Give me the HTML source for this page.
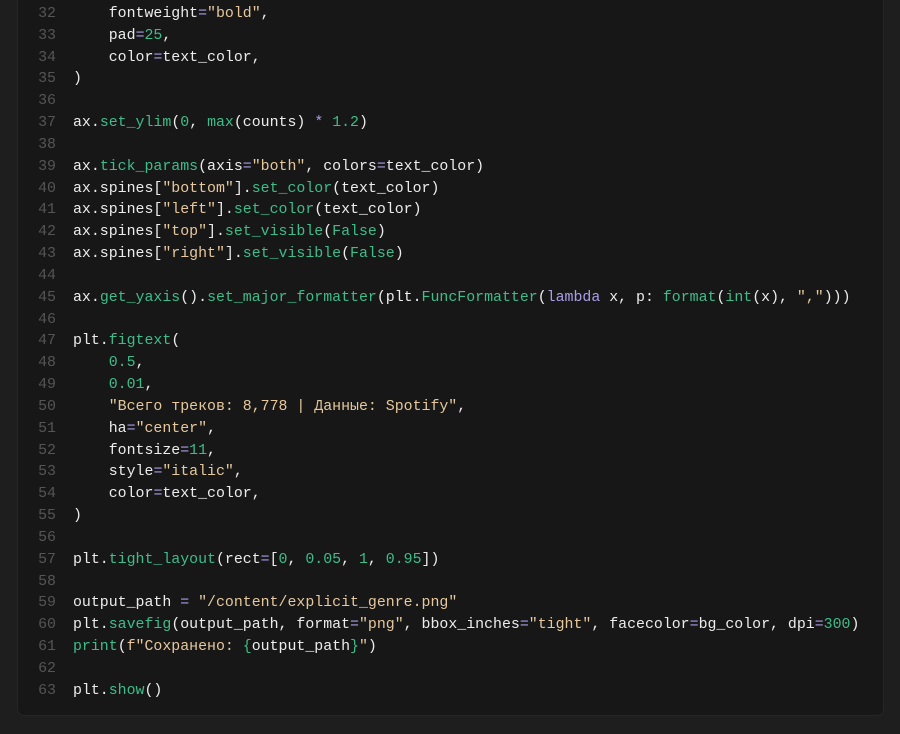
<!DOCTYPE html>
<html><head><meta charset="utf-8"><style>
html,body{margin:0;padding:0;background:#1e1e1e;width:900px;height:734px;overflow:hidden}
.panel{position:absolute;left:17px;top:-10px;width:865px;height:725px;background:#171717;border:1px solid #262626;border-top:none;border-radius:0 0 7px 7px}
.code{position:absolute;left:0;top:4px;font-family:"Liberation Mono","Noto Sans CJK SC",monospace;font-size:14.9px;line-height:21.84px;color:#ececec}
.l{display:block;height:21.84px;white-space:pre}
.n{display:inline-block;width:56px;text-align:right;color:#555;margin-right:17px}
.f{color:#3dbd8a}.s{color:#e6c89c}.k{color:#a99ee8}.d{color:#3dbd8a}
</style></head><body>
<div class="panel"></div>
<div class="code">
<span class="l"><span class="n">32</span>    fontweight<span class="k">=</span><span class="s">"bold"</span>,</span>
<span class="l"><span class="n">33</span>    pad<span class="k">=</span><span class="d">25</span>,</span>
<span class="l"><span class="n">34</span>    color<span class="k">=</span>text_color,</span>
<span class="l"><span class="n">35</span>)</span>
<span class="l"><span class="n">36</span></span>
<span class="l"><span class="n">37</span>ax.<span class="f">set_ylim</span>(<span class="d">0</span>, <span class="f">max</span>(counts) <span class="k">*</span> <span class="d">1.2</span>)</span>
<span class="l"><span class="n">38</span></span>
<span class="l"><span class="n">39</span>ax.<span class="f">tick_params</span>(axis<span class="k">=</span><span class="s">"both"</span>, colors<span class="k">=</span>text_color)</span>
<span class="l"><span class="n">40</span>ax.spines[<span class="s">"bottom"</span>].<span class="f">set_color</span>(text_color)</span>
<span class="l"><span class="n">41</span>ax.spines[<span class="s">"left"</span>].<span class="f">set_color</span>(text_color)</span>
<span class="l"><span class="n">42</span>ax.spines[<span class="s">"top"</span>].<span class="f">set_visible</span>(<span class="d">False</span>)</span>
<span class="l"><span class="n">43</span>ax.spines[<span class="s">"right"</span>].<span class="f">set_visible</span>(<span class="d">False</span>)</span>
<span class="l"><span class="n">44</span></span>
<span class="l"><span class="n">45</span>ax.<span class="f">get_yaxis</span>().<span class="f">set_major_formatter</span>(plt.<span class="f">FuncFormatter</span>(<span class="k">lambda</span> x, p: <span class="f">format</span>(<span class="f">int</span>(x), <span class="s">","</span>)))</span>
<span class="l"><span class="n">46</span></span>
<span class="l"><span class="n">47</span>plt.<span class="f">figtext</span>(</span>
<span class="l"><span class="n">48</span>    <span class="d">0.5</span>,</span>
<span class="l"><span class="n">49</span>    <span class="d">0.01</span>,</span>
<span class="l"><span class="n">50</span>    <span class="s">"Всего треков: 8,778 | Данные: Spotify"</span>,</span>
<span class="l"><span class="n">51</span>    ha<span class="k">=</span><span class="s">"center"</span>,</span>
<span class="l"><span class="n">52</span>    fontsize<span class="k">=</span><span class="d">11</span>,</span>
<span class="l"><span class="n">53</span>    style<span class="k">=</span><span class="s">"italic"</span>,</span>
<span class="l"><span class="n">54</span>    color<span class="k">=</span>text_color,</span>
<span class="l"><span class="n">55</span>)</span>
<span class="l"><span class="n">56</span></span>
<span class="l"><span class="n">57</span>plt.<span class="f">tight_layout</span>(rect<span class="k">=</span>[<span class="d">0</span>, <span class="d">0.05</span>, <span class="d">1</span>, <span class="d">0.95</span>])</span>
<span class="l"><span class="n">58</span></span>
<span class="l"><span class="n">59</span>output_path <span class="k">=</span> <span class="s">"/content/explicit_genre.png"</span></span>
<span class="l"><span class="n">60</span>plt.<span class="f">savefig</span>(output_path, format<span class="k">=</span><span class="s">"png"</span>, bbox_inches<span class="k">=</span><span class="s">"tight"</span>, facecolor<span class="k">=</span>bg_color, dpi<span class="k">=</span><span class="d">300</span>)</span>
<span class="l"><span class="n">61</span><span class="f">print</span>(<span class="s">f"Сохранено: </span><span class="d">{</span>output_path<span class="d">}</span><span class="s">"</span>)</span>
<span class="l"><span class="n">62</span></span>
<span class="l"><span class="n">63</span>plt.<span class="f">show</span>()</span>
</div>
</body></html>
